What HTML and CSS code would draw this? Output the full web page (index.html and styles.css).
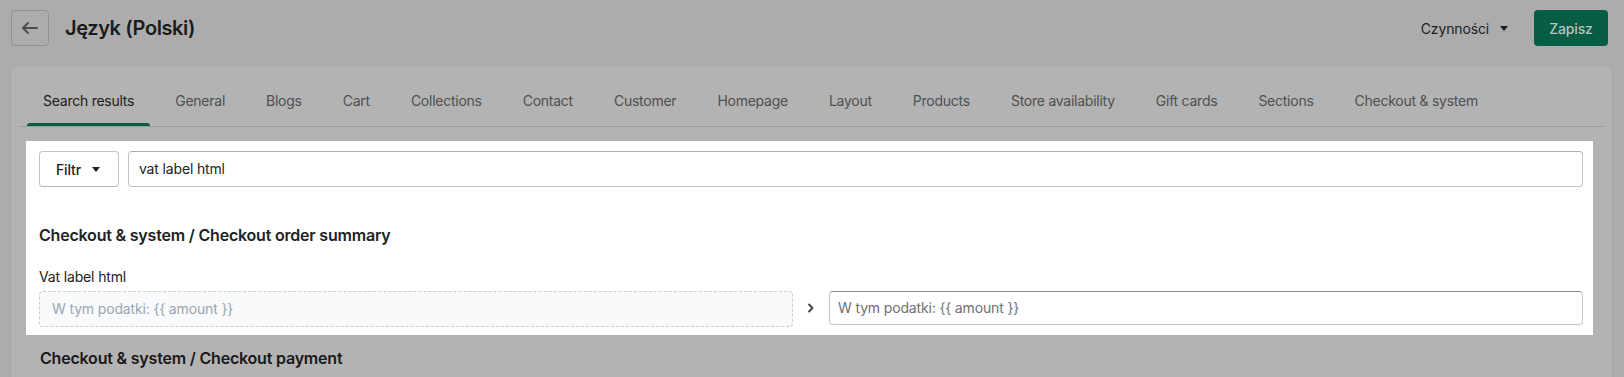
FILE: index.html
```html
<!DOCTYPE html>
<html lang="pl">
<head>
<meta charset="utf-8">
<title>Język (Polski)</title>
<link rel="stylesheet" href="styles.css">
</head>
<body>
<div class="page">
  <header class="topbar">
    <div class="topbar-left">
      <button class="back-btn" aria-label="Wstecz">
        <svg width="20" height="20" viewBox="0 0 20 20"><path d="M17 9H5.414l3.293-3.293a.999.999 0 1 0-1.414-1.414l-5 5a.999.999 0 0 0 0 1.414l5 5a.997.997 0 0 0 1.414 0 .999.999 0 0 0 0-1.414L5.414 11H17a1 1 0 1 0 0-2z" fill="#4a4c4e"/></svg>
      </button>
      <h1 class="title">Język (Polski)</h1>
    </div>
    <div class="topbar-right">
      <button class="actions-btn">Czynności <span class="caret caret-dark"></span></button>
      <button class="save-btn">Zapisz</button>
    </div>
  </header>

  <main class="card">
    <nav class="tabs">
      <a class="tab active">Search results</a>
      <a class="tab">General</a>
      <a class="tab">Blogs</a>
      <a class="tab">Cart</a>
      <a class="tab">Collections</a>
      <a class="tab">Contact</a>
      <a class="tab">Customer</a>
      <a class="tab">Homepage</a>
      <a class="tab">Layout</a>
      <a class="tab">Products</a>
      <a class="tab">Store availability</a>
      <a class="tab">Gift cards</a>
      <a class="tab">Sections</a>
      <a class="tab">Checkout &amp; system</a>
    </nav>

    <section class="spotlight">
      <div class="filter-row">
        <button class="filter-btn">Filtr <span class="caret"></span></button>
        <div class="search-input">vat label html</div>
      </div>
      <h2 class="group-title">Checkout &amp; system / Checkout order summary</h2>
      <div class="field">
        <div class="field-label">Vat label html</div>
        <div class="translation-row">
          <div class="source-box">W tym podatki: {{ amount }}</div>
          <div class="chevron">
            <svg width="10" height="12" viewBox="0 0 10 12"><path d="M3 2.5l3.5 3.5L3 9.5" fill="none" stroke="#3f4144" stroke-width="1.8" stroke-linecap="round" stroke-linejoin="round"/></svg>
          </div>
          <div class="target-input">W tym podatki: {{ amount }}</div>
        </div>
      </div>
    </section>

    <h2 class="group-title dim">Checkout &amp; system / Checkout payment</h2>
  </main>
</div>
</body>
</html>
```

FILE: styles.css
```css
* { box-sizing: border-box; }
html, body { margin: 0; padding: 0; }
body {
  background: #acacac;
  font-family: Inter, "Noto Sans", "Liberation Sans", sans-serif;
  color: #1c1d1e;
  letter-spacing: -0.15px;
  height: 377px;
  overflow: hidden;
}
button { font-family: inherit; letter-spacing: inherit; cursor: pointer; }

.page { padding: 10px 12px 0 11px; }

.topbar {
  display: flex;
  justify-content: space-between;
  align-items: center;
  padding-right: 4px;
  height: 36px;
}
.topbar-left { display: flex; align-items: center; gap: 16px; }
.back-btn {
  width: 38px;
  height: 36px;
  border: 1px solid #8e9092;
  border-radius: 4px;
  background: transparent;
  display: flex;
  align-items: center;
  justify-content: center;
  padding: 0;
}
.title {
  margin: 0;
  font-size: 20px;
  font-weight: 600;
  line-height: 28px;
  letter-spacing: -0.4px;
  color: #1a1b1c;
}
.topbar-right { display: flex; align-items: center; gap: 26px; }
.actions-btn {
  background: none;
  border: 0;
  padding: 0;
  font-size: 14px;
  color: #1c1d1e;
  display: flex;
  align-items: center;
  gap: 11px;
}
.caret {
  display: inline-block;
  width: 0; height: 0;
  border-left: 4.5px solid transparent;
  border-right: 4.5px solid transparent;
  border-top: 5px solid #202223;
}
.caret-dark { border-top-color: #1c1d1e; }
.save-btn {
  height: 36px;
  width: 74px;
  padding: 0;
  border: 0;
  border-radius: 4px;
  background: #075c44;
  color: #b9c4bf;
  font-size: 14px;
  font-weight: 500;
}

.card {
  margin-top: 20px;
  background: #b3b3b3;
  border-radius: 8px 8px 0 0;
  padding: 8px 8px 0;
  height: 400px;
  box-shadow: 0 0 0 1px rgba(0,0,0,0.025);
}
.tabs {
  display: flex;
  gap: 9px;
  padding-left: 8px;
  border-bottom: 1px solid #9a9a9a;
}
.tab {
  position: relative;
  padding: 17px 16px 15px;
  font-size: 14px;
  line-height: 20px;
  letter-spacing: -0.25px;
  color: #4e5052;
  white-space: nowrap;
}
.tab.active { color: #1b1c1d; }
.tab.active::after {
  content: "";
  position: absolute;
  left: 0; right: 0; bottom: 0;
  height: 3px;
  border-radius: 3px 3px 0 0;
  background: #0a5b43;
}

.spotlight {
  background: #fff;
  margin: 14px 11px 0 7px;
  padding: 10px 10px 8px 13px;
}
.filter-row { display: flex; gap: 9px; }
.filter-btn {
  height: 36px;
  padding: 0 18px 0 16px;
  background: #fff;
  border: 1px solid #c2c5c9;
  border-bottom-color: #b5b9bd;
  border-radius: 4px;
  font-size: 14px;
  font-weight: 500;
  color: #202223;
  display: flex;
  align-items: center;
  gap: 11px;
}
.search-input {
  flex: 1;
  height: 36px;
  border: 1px solid #c0c4c8;
  border-top-color: #a9aeb3;
  border-radius: 4px;
  padding: 0 10px;
  font-size: 14px;
  line-height: 34px;
  color: #202223;
}
.group-title {
  margin: 36px 0 0;
  font-size: 16px;
  line-height: 24px;
  font-weight: 600;
  letter-spacing: -0.2px;
  color: #202223;
}
.field { margin-top: 20px; }
.field-label {
  font-size: 14px;
  line-height: 20px;
  color: #202223;
}
.translation-row {
  margin-top: 4px;
  display: grid;
  grid-template-columns: 1fr 36px 1fr;
  align-items: start;
}
.source-box {
  height: 36px;
  background: #f9fafb;
  border: 1px dashed #c9cdd2;
  border-radius: 4px;
  padding: 0 12px;
  font-size: 14px;
  line-height: 34px;
  color: #9aa5b1;
}
.chevron {
  height: 34px;
  display: flex;
  align-items: center;
  justify-content: center;
}
.target-input {
  height: 34px;
  border: 1px solid #c4c8cc;
  border-top-color: #8c9196;
  border-radius: 4px;
  padding: 0 8px;
  font-size: 14px;
  line-height: 32px;
  color: #6d7175;
}
.group-title.dim {
  margin: 11px 0 0 21px;
  color: #19191a;
}
```
